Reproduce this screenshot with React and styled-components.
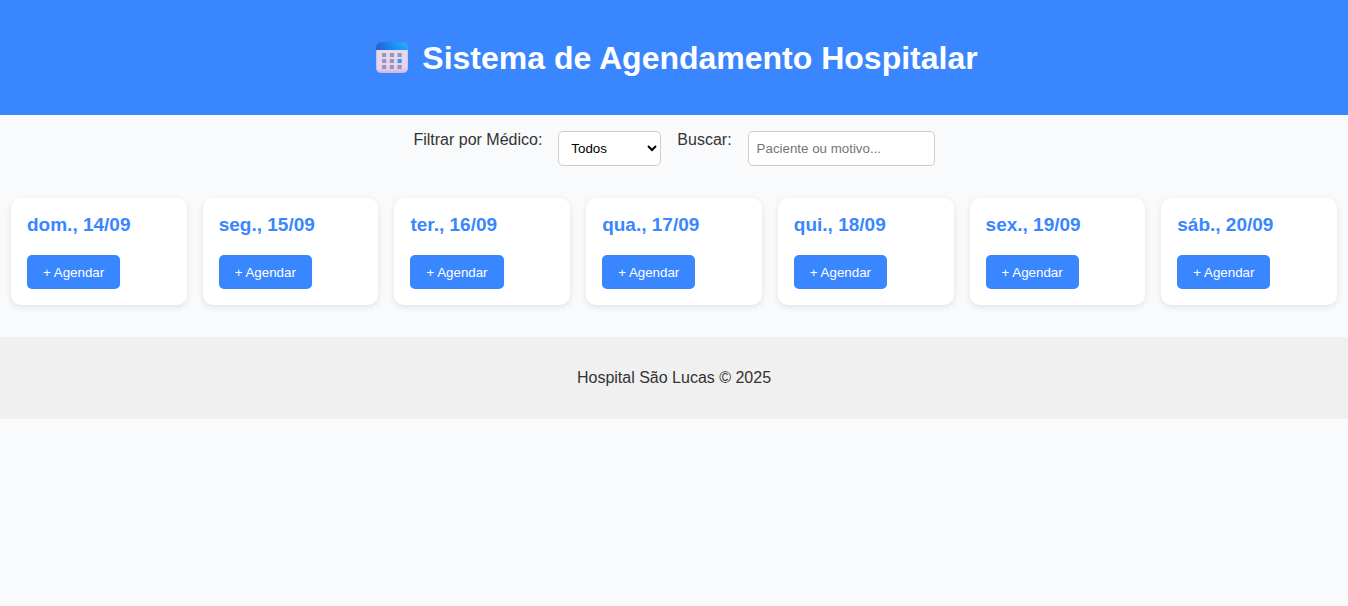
import React, { useState } from "react";
import styled, { createGlobalStyle } from "styled-components";

const GlobalStyle = createGlobalStyle`
  * { box-sizing: border-box; }
  body {
    margin: 0;
    background: #f9fafc;
    color: #333;
    font-family: "Liberation Sans", Arial, sans-serif;
    font-size: 16px;
    line-height: 18px;
  }
  button, select, input { font-family: inherit; }
`;

const Header = styled.header`
  display: flex;
  justify-content: center;
  padding: 40px 16px 38px;
  background: #3a86ff;
  color: #fff;
`;

const Title = styled.h1`
  display: flex;
  align-items: center;
  gap: 12px;
  margin: 0;
  font-size: 32px;
  line-height: 37px;
`;

const Icon = styled.svg`
  flex: none;
  width: 40px;
  height: 36px;
`;

const Filters = styled.section`
  display: flex;
  flex-wrap: wrap;
  justify-content: center;
  gap: 16px;
  padding: 16px;
`;

const Select = styled.select`
  width: 103px;
  height: 35px;
  padding: 8px;
  border: 1px solid #ccc;
  border-radius: 5px;
  background-color: #fff;
  color: #000;
`;

const Search = styled.input`
  width: 187px;
  height: 35px;
  padding: 8px;
  border: 1px solid #ccc;
  border-radius: 5px;
  background: #fff;
  &::placeholder { color: #757575; }
`;

const Week = styled.main`
  display: grid;
  grid-template-columns: repeat(7, minmax(0, 1fr));
  gap: 16px;
  padding: 16px 11px;
  @media (max-width: 1100px) {
    grid-template-columns: repeat(auto-fit, minmax(160px, 1fr));
  }
`;

const DayCard = styled.section`
  padding: 16px;
  border-radius: 10px;
  background: #fff;
  box-shadow: 0 2px 6px rgba(0, 0, 0, 0.1);
`;

const DayTitle = styled.h2`
  margin: 0 0 20px;
  color: #3a86ff;
  font-size: 19px;
  line-height: 21px;
`;

const BookButton = styled.button`
  display: block;
  height: 34px;
  padding: 0 16px;
  border: 0;
  border-radius: 5px;
  background: #3a86ff;
  color: #fff;
  cursor: pointer;
`;

const Footer = styled.footer`
  margin-top: 16px;
  padding: 32px 16px;
  background: #f0f0f0;
  text-align: center;
`;

const days = [
  "dom., 14/09",
  "seg., 15/09",
  "ter., 16/09",
  "qua., 17/09",
  "qui., 18/09",
  "sex., 19/09",
  "sáb., 20/09",
];

function CalendarIcon() {
  return (
    <Icon viewBox="-4 1 40 36" aria-hidden="true">
      <defs>
        <linearGradient id="page" x1="0" y1="0" x2="0" y2="1">
          <stop offset="0" stopColor="#e0dcf3" />
          <stop offset="0.8" stopColor="#e4d3f0" />
          <stop offset="1" stopColor="#cdb4dc" />
        </linearGradient>
        <linearGradient id="edge" x1="0" y1="0" x2="1" y2="0">
          <stop offset="0" stopColor="#b9a9c9" stopOpacity="0.7" />
          <stop offset="0.08" stopColor="#e4d5f0" stopOpacity="0" />
          <stop offset="0.94" stopColor="#e4d5f0" stopOpacity="0" />
          <stop offset="1" stopColor="#c9b0dc" stopOpacity="0.7" />
        </linearGradient>
        <linearGradient id="band" x1="0" y1="0.6" x2="1" y2="0.4">
          <stop offset="0" stopColor="#3558cc" />
          <stop offset="0.2" stopColor="#1d72df" />
          <stop offset="0.6" stopColor="#1c90f7" />
          <stop offset="1" stopColor="#2eaaff" />
        </linearGradient>
      </defs>
      <path d="M2 9H34V27Q34 33 28 33H8Q2 33 2 27Z" fill="url(#page)" />
      <path d="M2 9H34V27Q34 33 28 33H8Q2 33 2 27Z" fill="url(#edge)" />
      <path d="M2 10V8Q2 2 8 2H28Q34 2 34 8V10Z" fill="url(#band)" />
      {[13, 19, 25].map((y) =>
        [8, 15.8, 23.5].map((x) => (
          <rect
            key={`${x}-${y}`}
            x={x}
            y={y}
            width="4.2"
            height="4"
            rx="0.5"
            fill={x === 23.5 && y === 19 ? "#3399f3" : "#a193ad"}
          />
        ))
      )}
    </Icon>
  );
}

export default function App() {
  const [doctor, setDoctor] = useState("Todos");
  const [query, setQuery] = useState("");

  return (
    <>
      <GlobalStyle />
      <Header>
        <Title>
          <CalendarIcon />
          Sistema de Agendamento Hospitalar
        </Title>
      </Header>
      <Filters>
        <label htmlFor="doctor">Filtrar por Médico:</label>
        <Select id="doctor" value={doctor} onChange={(e) => setDoctor(e.target.value)}>
          <option>Todos</option>
        </Select>
        <label htmlFor="search">Buscar:</label>
        <Search
          id="search"
          type="text"
          placeholder="Paciente ou motivo..."
          value={query}
          onChange={(e) => setQuery(e.target.value)}
        />
      </Filters>
      <Week>
        {days.map((day) => (
          <DayCard key={day}>
            <DayTitle>{day}</DayTitle>
            <BookButton type="button">+ Agendar</BookButton>
          </DayCard>
        ))}
      </Week>
      <Footer>Hospital São Lucas © 2025</Footer>
    </>
  );
}
